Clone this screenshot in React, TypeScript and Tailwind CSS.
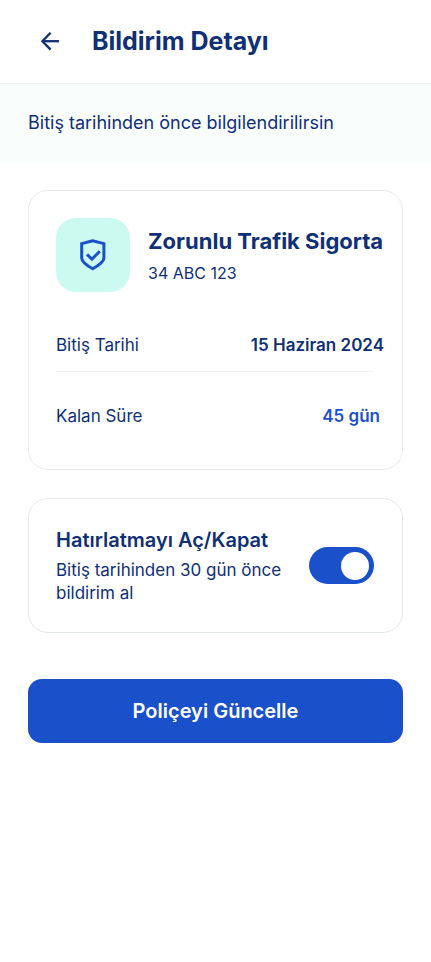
import { useState } from "react";

function BackIcon() {
  return (
    <svg viewBox="0 0 24 24" className="size-6" fill="none" stroke="currentColor" strokeWidth="2.3" aria-hidden="true">
      <path d="M21 12.2H4.2" />
      <path d="M12.6 3.8L4.4 12.2L12.6 20.6" />
    </svg>
  );
}

function ShieldIcon() {
  return (
    <svg viewBox="0 0 32 36" className="h-9 w-8" fill="none" stroke="currentColor" strokeWidth="3" aria-hidden="true">
      <path d="M15.7 3.7L4.7 6.6V21C4.7 24.4 7.6 27.2 15.7 31.8C23.8 27.2 26.9 24.4 26.9 21V6.6L15.7 3.7Z" />
      <path d="M10 17.4L14.9 22.2L22.8 14.2" />
    </svg>
  );
}

export default function App() {
  const [reminder, setReminder] = useState(true);

  return (
    <div className="min-h-screen bg-white font-['Inter','Liberation_Sans',sans-serif] text-[#0f2f76]">
      <header className="flex h-[84px] items-center gap-5 border-b border-[#edf3f4] px-7 pb-0.5">
        <button type="button" aria-label="Geri" className="p-[10px]">
          <BackIcon />
        </button>
        <h1 className="text-[25px] leading-8 font-bold">Bildirim Detayı</h1>
      </header>

      <p className="bg-[#f9fdfc] px-7 py-[27px] text-[18px] leading-6">Bitiş tarihinden önce bilgilendirilirsin</p>

      <main className="flex flex-col px-7 pt-7">
        <section className="rounded-[20px] border border-[#e6e9f2] pt-[27px] pr-[18px] pb-[41px] pl-[27px]">
          <div className="flex items-center gap-[18px]">
            <div className="flex size-[74px] shrink-0 items-center justify-center rounded-[20px] bg-[#cdfaf0] text-[#1a50c9]">
              <ShieldIcon />
            </div>
            <div className="min-w-0">
              <h2 className="text-[22px] leading-8 font-bold whitespace-nowrap">Zorunlu Trafik Sigorta</h2>
              <p className="mt-1 text-base leading-6">34 ABC 123</p>
            </div>
          </div>

          <dl className="mt-[41px] text-[17px] leading-6">
            <div className="flex justify-between">
              <dt>Bitiş Tarihi</dt>
              <dd className="font-semibold">15 Haziran 2024</dd>
            </div>
            <div className="mt-[14px] mr-[10px] border-t border-[#f0f1f3]" />
            <div className="mt-8 mr-1 flex justify-between">
              <dt>Kalan Süre</dt>
              <dd className="font-semibold text-[#1a50c9]">45 gün</dd>
            </div>
          </dl>
        </section>

        <section className="mt-7 flex items-center justify-between rounded-[20px] border border-[#e2e7f0] py-[27px] pr-7 pl-[27px]">
          <label htmlFor="reminder" className="pt-0.5">
            <span className="block text-xl leading-6 font-semibold">Hatırlatmayı Aç/Kapat</span>
            <span className="mt-[7px] block text-[17px] leading-[23px]">
              Bitiş tarihinden 30 gün önce
              <br />
              bildirim al
            </span>
          </label>
          <input
            id="reminder"
            type="checkbox"
            role="switch"
            checked={reminder}
            onChange={(e) => setReminder(e.target.checked)}
            className="flex h-[37px] w-[65px] shrink-0 cursor-pointer appearance-none items-center rounded-full bg-slate-300 px-[5px] before:size-7 before:rounded-full before:bg-white checked:justify-end checked:bg-[#1a50c9]"
          />
        </section>

        <button type="button" className="mt-[46px] h-16 rounded-[14px] bg-[#1a50c9] text-xl font-semibold text-white">
          Poliçeyi Güncelle
        </button>
      </main>
    </div>
  );
}
